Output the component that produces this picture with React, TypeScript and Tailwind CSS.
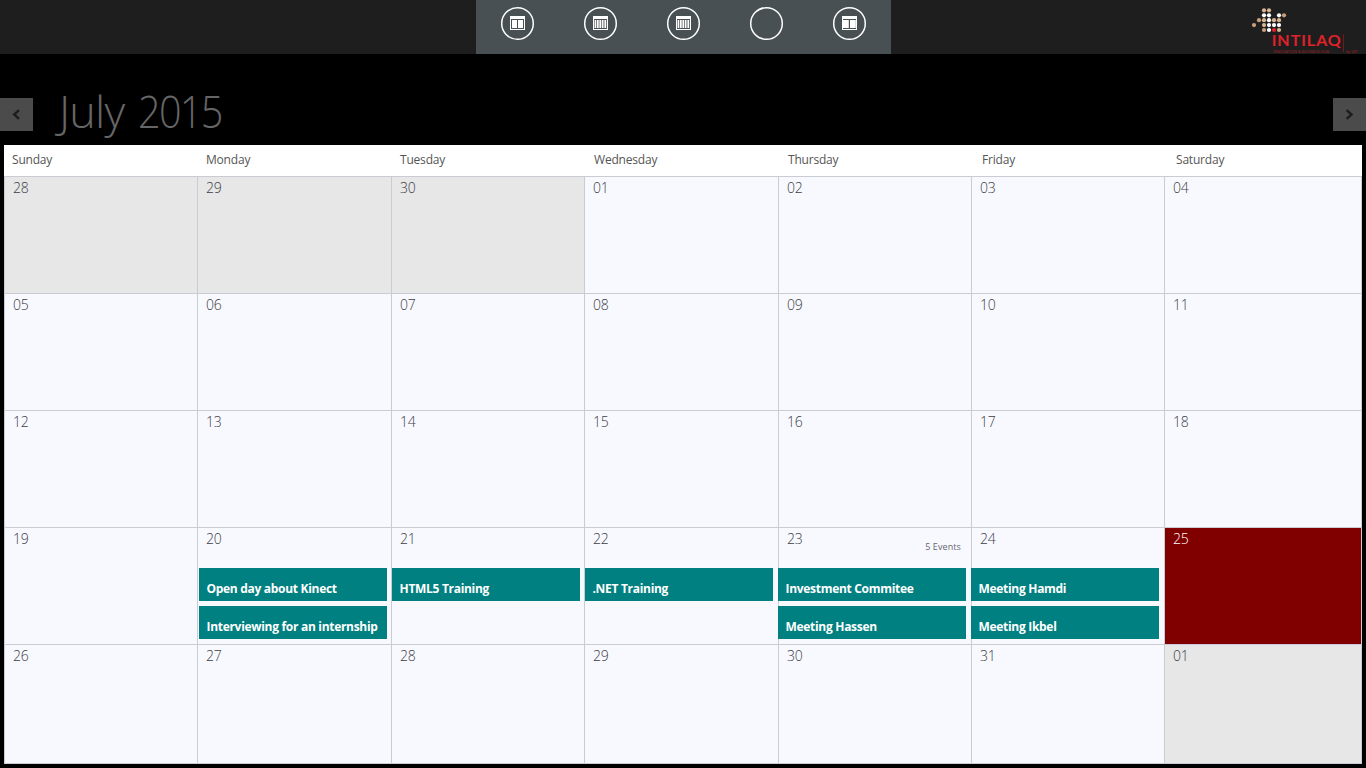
import { ReactNode } from 'react';

const dayNames = ['Sunday', 'Monday', 'Tuesday', 'Wednesday', 'Thursday', 'Friday', 'Saturday'];

const weeks = [
  ['28', '29', '30', '01', '02', '03', '04'],
  ['05', '06', '07', '08', '09', '10', '11'],
  ['12', '13', '14', '15', '16', '17', '18'],
  ['19', '20', '21', '22', '23', '24', '25'],
  ['26', '27', '28', '29', '30', '31', '01'],
];

const events: Record<string, string[]> = {
  '3-1': ['Open day about Kinect', 'Interviewing for an internship'],
  '3-2': ['HTML5 Training'],
  '3-3': ['.NET Training'],
  '3-4': ['Investment Commitee', 'Meeting Hassen'],
  '3-5': ['Meeting Hamdi', 'Meeting Ikbel'],
};

// Horizontal position of the event bars inside their column
const eventOffset = ['', 'ml-px', 'ml-0', 'ml-0', '-ml-px', '-ml-px', ''];

function CircleButton({ children }: { children?: ReactNode }) {
  return (
    <button className="flex w-[83px] justify-center">
      <svg width="35" height="35" viewBox="0 0 35 35" fill="none">
        <circle cx="17.5" cy="17.5" r="15.8" stroke="#fff" strokeWidth="1.5" />
        {children}
      </svg>
    </button>
  );
}

function ColumnsIcon({ bars }: { bars: number[][] }) {
  return (
    <>
      <rect x="10" y="10" width="15" height="14" fill="#fff" />
      <rect x="11" y="13" width="13" height="10" fill="#495054" />
      {bars.map(([x, w]) => (
        <rect key={x} x={x} y="14" width={w} height="8" fill="#fff" />
      ))}
    </>
  );
}

const weekBars = [[11.6, 1.7], [14, 1.7], [16.4, 1.7], [18.8, 1.7], [21.4, 1.8]];

const dots: [number, number, string][] = [
  [24, 10.3, '#d9b591'], [29, 10.3, '#d9b591'],
  [24, 15.3, '#fff'], [29, 15.3, '#fff'], [39, 15.3, '#fff'], [44, 15.3, '#c99f7b'],
  [19, 20.2, '#c99f7b'], [24, 20.2, '#d9b591'], [29, 20.2, '#fff'], [34, 20.2, '#d9b591'], [39, 20.2, '#d9b591'],
  [14, 25.1, '#c99f7b'], [24, 25.1, '#d9b591'], [29, 25.1, '#fff'], [34, 25.1, '#fff'], [39, 25.1, '#fff'],
  [24, 30, '#c99f7b'], [29, 30, '#fff'], [34, 30, '#e2222c'], [39, 30, '#d9b591'],
];

function Logo() {
  return (
    <svg width="126" height="54" viewBox="0 0 126 54" fontFamily="'Open Sans', sans-serif">
      {dots.map(([x, y, c]) => (
        <circle key={`${x}-${y}`} cx={x} cy={y} r="2.1" fill={c} />
      ))}
      <text x="31.7" y="46.3" fontSize="16" fontFamily="Lato, sans-serif" fontWeight="600" fill="#e2222c" stroke="#e2222c" strokeWidth="0.2" textLength="69" lengthAdjust="spacing">INTILAQ</text>
      <text x="33" y="53" fontSize="4" fill="#a01f27" textLength="56" lengthAdjust="spacingAndGlyphs">INNOVATION &amp; BUSINESS HUB</text>
      <path d="M103.5 34.5V52" stroke="#75191e" strokeWidth="1" />
      <text x="106" y="53" fontSize="4" fill="#b21f27" textLength="12" lengthAdjust="spacingAndGlyphs">by QFF</text>
    </svg>
  );
}

function Arrow({ d }: { d: string }) {
  return (
    <button className="flex size-[33px] items-center justify-center bg-[#4b4b4b]">
      <svg width="33" height="33" viewBox="0 0 33 33" fill="none">
        <path d={d} stroke="#1d1d1d" strokeWidth="2.4" />
      </svg>
    </button>
  );
}

export default function App() {
  return (
    <div className="flex h-[768px] w-[1366px] flex-col overflow-hidden bg-black font-['Open_Sans',sans-serif]">
      <header className="flex h-[54px] bg-[#1e1e1e]">
        <div className="w-[476px]" />
        <nav className="flex w-[415px] items-start bg-[#495054] pt-[6px]">
          <CircleButton>
            <ColumnsIcon bars={[[12, 5], [18, 5]]} />
          </CircleButton>
          <CircleButton>
            <ColumnsIcon bars={weekBars} />
          </CircleButton>
          <CircleButton>
            <ColumnsIcon bars={weekBars} />
          </CircleButton>
          <CircleButton />
          <CircleButton>
            <ColumnsIcon bars={[[11, 5.8], [18, 5.8]]} />
          </CircleButton>
        </nav>
        <div className="ml-auto">
          <Logo />
        </div>
      </header>

      <div className="flex h-[91px] items-start justify-between pt-[44px]">
        <div className="flex">
          <Arrow d="M19 12.2L14.2 16.5L19 20.8" />
          <h1 className="-mt-[21px] ml-[26px] flex text-[45px] leading-[68px] font-light whitespace-nowrap text-[#666]">
            <span className="w-[79px] tracking-[-0.8px]">July </span>
            <span className="origin-left scale-x-[0.88] tracking-[-1.9px]">2015</span>
          </h1>
        </div>
        <Arrow d="M13.7 12.2L18.5 16.5L13.7 20.8" />
      </div>

      <main className="mx-1 w-[1358px] bg-white">
        <div className="grid h-[31px] grid-cols-[repeat(7,194px)] overflow-hidden">
          {dayNames.map((d) => (
            <div key={d} className="pl-2 text-[12px] leading-[30px] tracking-[-0.2px] text-[#555]">
              {d}
            </div>
          ))}
        </div>
        <div className="grid grid-cols-[193px_194px_193px_194px_193px_193px_198px] grid-rows-[117px_117px_117px_117px_119px] border-b border-[#cbcbd3]">
          {weeks.flatMap((week, r) =>
            week.map((day, c) => {
              const outside = (r === 0 && c < 3) || (r === 4 && c === 6);
              const today = r === 3 && c === 6;
              const bg = outside ? 'bg-[#e7e7e7]' : today ? 'bg-[#800000]' : 'bg-[#f8f9ff]';
              const list = events[`${r}-${c}`];
              return (
                <div
                  key={`${r}-${c}`}
                  className={`flex flex-col border-t border-l border-[#cbcbd3] ${c === 6 ? 'border-r' : ''} ${bg}`}
                >
                  <div className="flex h-[40px] shrink-0 justify-between pr-[10px] pl-[8px]">
                    <span className={`text-[14px] leading-[22px] font-light tracking-[-0.3px] ${today ? 'text-white' : 'text-[#3c3c44]'}`}>
                      {day}
                    </span>
                    {r === 3 && c === 4 && (
                      <span className="pt-[12px] text-[9px] leading-[14px] tracking-[0.1px] text-[#66666e]">5 Events</span>
                    )}
                  </div>
                  {list && (
                    <div className={`flex flex-col gap-[5px] ${eventOffset[c]}`}>
                      {list.map((e) => (
                        <div
                          key={e}
                          className="h-[33px] w-[188px] bg-[#008080] pt-[12px] pl-[7.5px] text-[12px] leading-[18px] font-bold tracking-[-0.3px] whitespace-nowrap text-white"
                        >
                          {e}
                        </div>
                      ))}
                    </div>
                  )}
                </div>
              );
            }),
          )}
        </div>
      </main>
    </div>
  );
}
